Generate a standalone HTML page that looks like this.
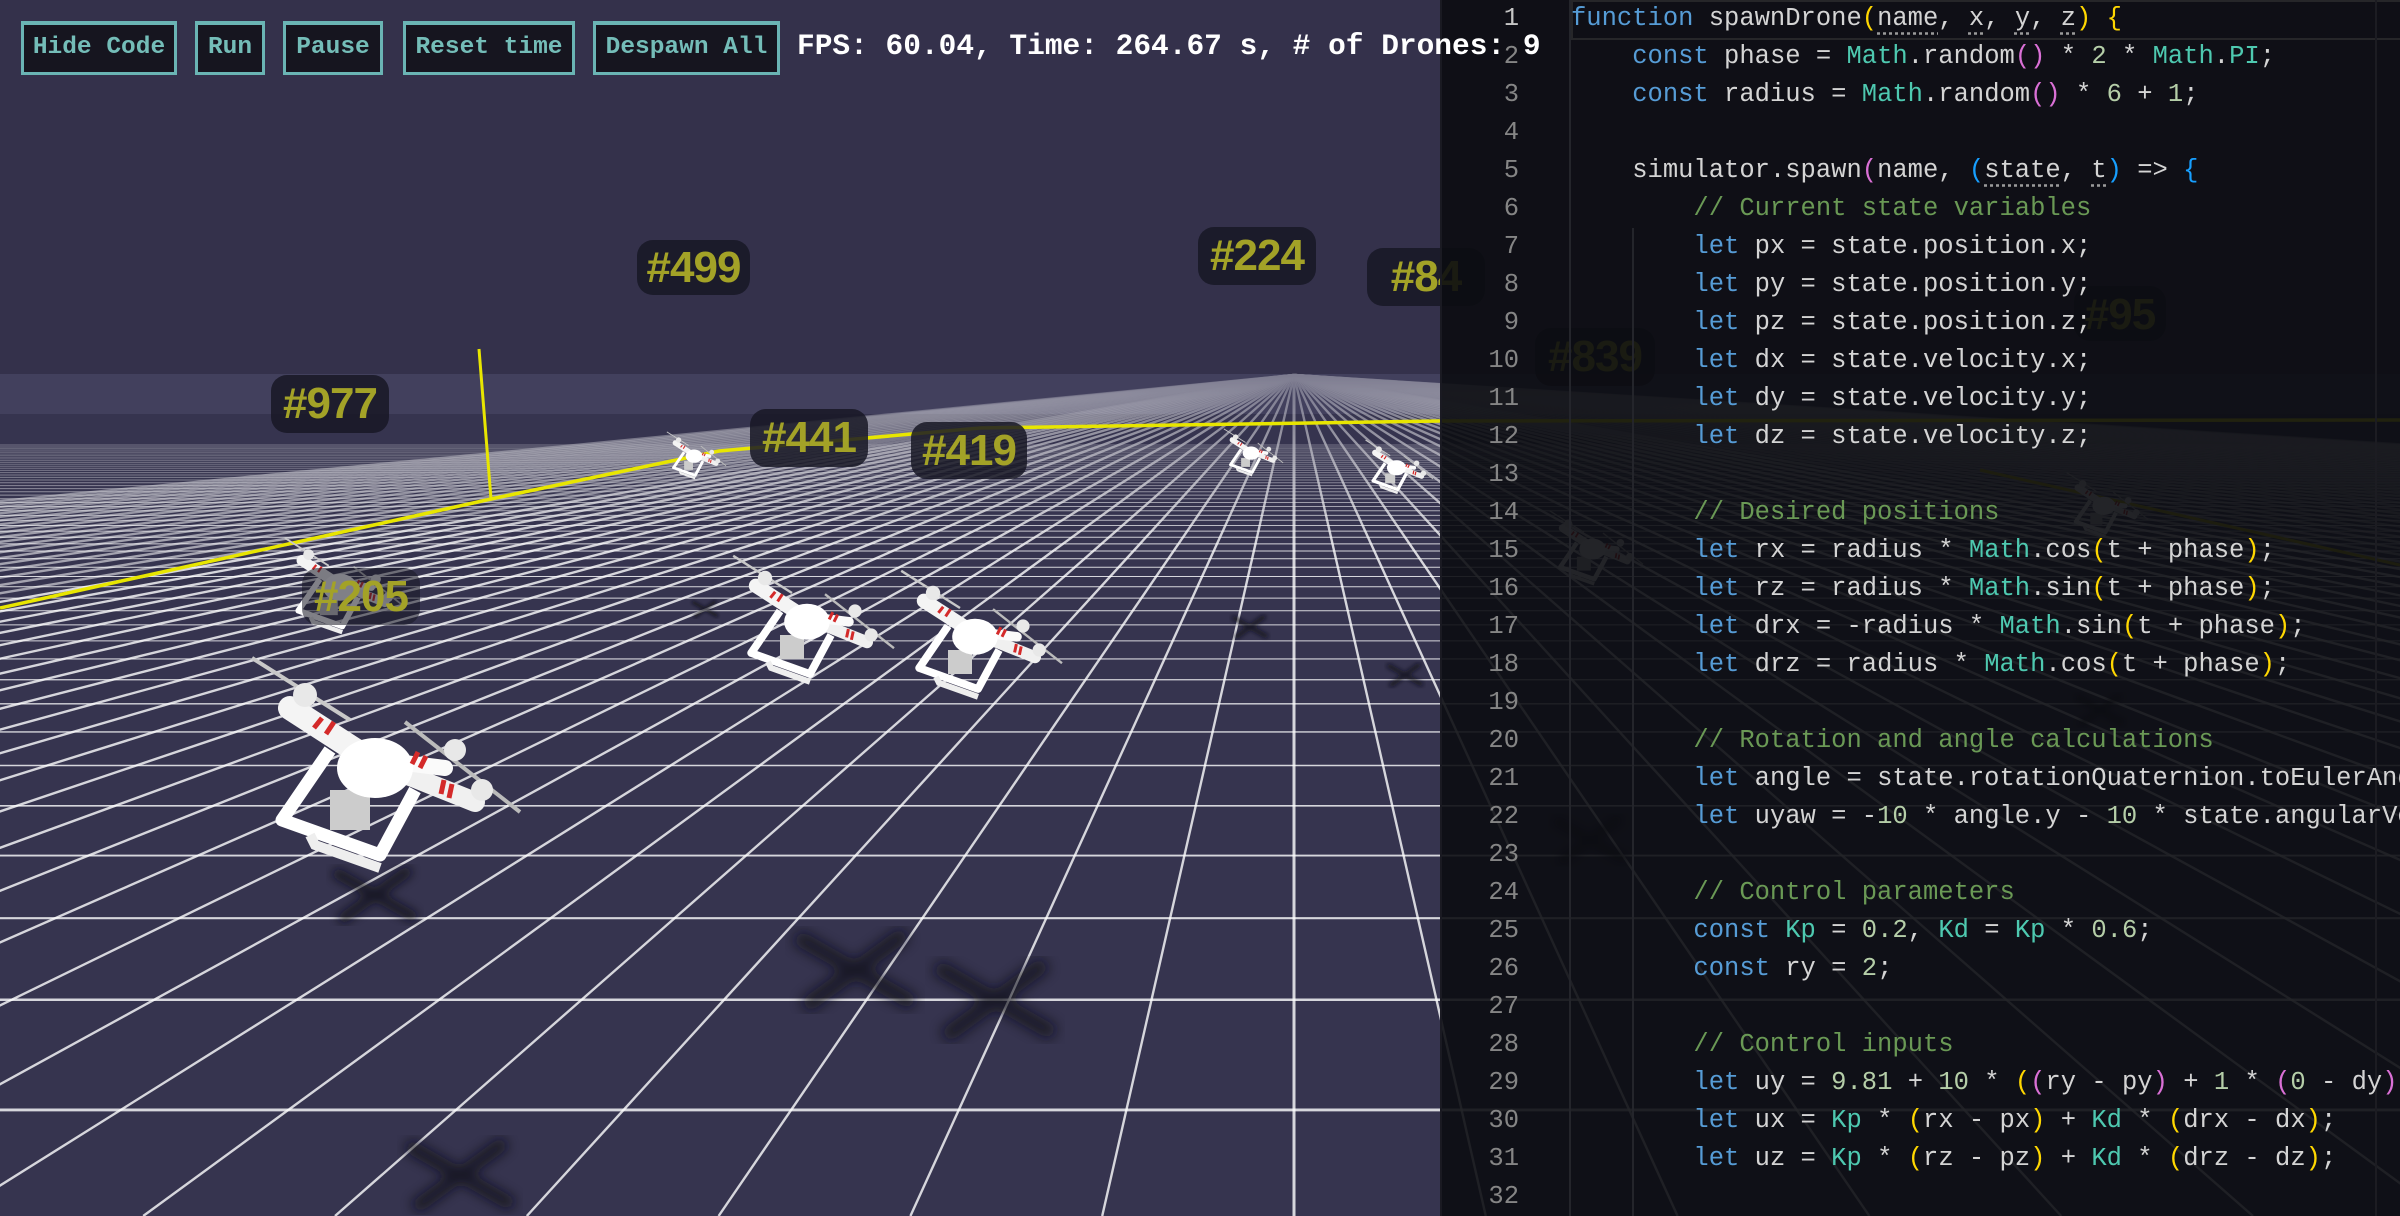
<!DOCTYPE html>
<html><head><meta charset="utf-8">
<style>
html,body{margin:0;padding:0;width:2400px;height:1216px;overflow:hidden;background:#34314b;position:relative;}
#grid{position:absolute;left:0;top:0;}
#ov{position:absolute;left:0;top:0;}
.lab{position:absolute;background:rgba(24,23,36,.85);border-radius:16px;color:#a3a227;font:bold 44px/58px "Liberation Sans Narrow","Liberation Sans",sans-serif;text-align:center;letter-spacing:-1px;}
#panel{position:absolute;left:1440px;top:0;width:960px;height:1216px;background:rgba(11,12,17,.9);border-left:2px solid #1a1a22;}
#nums{position:absolute;left:0;top:0;width:77px;text-align:right;color:#858585;font:25.5px/38px "Liberation Mono",monospace;white-space:pre;}
#code{position:absolute;left:129px;top:0;width:831px;color:#d4d4d4;font:25.5px/38px "Liberation Mono",monospace;white-space:pre;overflow:hidden;}
.k{color:#569cd6}.m{color:#4ec9b0}.n{color:#b5cea8}.c{color:#6a9955}.y{color:#ffd700}.p{color:#da70d6}.b{color:#179fff}
.u{text-decoration:underline dotted #9a9a9a;text-underline-offset:7px}
.g{position:absolute;top:0;width:2px;background:#24252b;}
#cur{position:absolute;left:129px;top:0;width:831px;height:36px;border:2px solid #262629;border-right:none;}
.btn{position:absolute;top:21px;height:54px;box-sizing:border-box;border:3px solid #6ab4b4;border-top-width:4px;background:#16151f;color:#74bdb8;font:bold 24.5px/46px "Liberation Mono",monospace;text-align:center;}
#fps{position:absolute;left:797px;top:26px;color:#fff;font:bold 29.5px/40px "Liberation Mono",monospace;white-space:pre;}
</style></head><body>
<svg id="grid" width="2400" height="1216" viewBox="0 0 2400 1216">
<defs>
<linearGradient id="mg" x1="0" y1="0" x2="0" y2="1216" gradientUnits="userSpaceOnUse">
<stop offset="0.306" stop-color="#fff" stop-opacity="0.3"/>
<stop offset="0.36" stop-color="#fff" stop-opacity="0.6"/>
<stop offset="0.45" stop-color="#fff" stop-opacity="1"/>
</linearGradient>
<mask id="mk" maskUnits="userSpaceOnUse" x="0" y="0" width="2400" height="1216"><rect width="2400" height="1216" fill="url(#mg)"/></mask>
</defs>
<rect width="2400" height="1216" fill="#34314b"/>
<rect x="0" y="374" width="2400" height="842" fill="#36344f"/>
<rect x="0" y="374" width="2400" height="40" fill="#5a5878" opacity=".35"/>
<g id="gl" stroke="#ffffff" fill="none" mask="url(#mk)"></g>
</svg>
<script>
(function(){
var g=document.getElementById('gl');
var vx=1294,vy=375,h=925,p=950,s=211,out='';
for(var k=-45;k<=70;k++){
 var xb=vx+k*191.8;
 var sw=k==0?3:2.4;
 var op=Math.abs(k)>25?.55:.8;
 out+='<line x1="'+vx+'" y1="'+vy+'" x2="'+xb.toFixed(1)+'" y2="1216" stroke-width="'+sw+'" stroke-opacity="'+op+'"/>';
}
for(var j=-4;j<=55;j++){
 var d=34.6+j*s; if(p+d<=0) continue;
 var r=p/(p+d);
 var y=vy+h*r; if(y>1230) continue;
 var w=Math.max(1,3.6*r);
 var op2=Math.min(.8,4.5*r);
 out+='<line x1="0" y1="'+y.toFixed(2)+'" x2="2400" y2="'+y.toFixed(2)+'" stroke-width="'+w.toFixed(2)+'" stroke-opacity="'+op2.toFixed(2)+'"/>';
}
g.innerHTML=out;
})();
</script>
<svg id="ov" width="2400" height="1216" viewBox="0 0 2400 1216">
<defs>
<filter id="bl"><feGaussianBlur stdDeviation="4"/></filter>
<symbol id="dr" viewBox="0 0 330 230">
 <line x1="22" y1="8" x2="120" y2="70" stroke="#c8c8c8" stroke-width="4"/>
 <line x1="175" y1="72" x2="290" y2="162" stroke="#bbb" stroke-width="4"/>
 <path d="M100 100 L52 170 L150 205 L185 140" stroke="#fff" stroke-width="13" fill="none" stroke-linejoin="round"/>
 <path d="M80 185 L85 195 L150 218" stroke="#eee" stroke-width="10" fill="none"/>
 <rect x="100" y="140" width="40" height="40" fill="#ccc"/>
 <line x1="60" y1="58" x2="125" y2="100" stroke="#f4f4f4" stroke-width="24" stroke-linecap="round"/>
 <line x1="170" y1="122" x2="245" y2="152" stroke="#f0f0f0" stroke-width="20" stroke-linecap="round"/>
 <line x1="150" y1="110" x2="215" y2="118" stroke="#fafafa" stroke-width="16" stroke-linecap="round"/>
 <ellipse cx="145" cy="118" rx="38" ry="30" fill="#fff"/>
 <circle cx="75" cy="45" r="12" fill="#e8e8e8"/><circle cx="225" cy="100" r="11" fill="#e8e8e8"/><circle cx="252" cy="140" r="11" fill="#e8e8e8"/>
 <path d="M92 68 l-8 10 M104 72 l-8 12 M188 102 l-6 12 M196 106 l-6 12 M214 130 l-3 14 M222 134 l-3 14" stroke="#d42a2a" stroke-width="5"/>
</symbol>
<symbol id="sh" viewBox="0 0 100 60"><g filter="url(#bl)" stroke="#101018" stroke-width="9" opacity=".75"><line x1="15" y1="10" x2="85" y2="50"/><line x1="80" y1="8" x2="20" y2="52"/></g></symbol>
</defs>
<use href="#sh" x="770" y="920" width="170" height="100"/>
<use href="#sh" x="910" y="950" width="170" height="100"/>
<use href="#sh" x="370" y="1130" width="180" height="90"/>
<use href="#sh" x="310" y="860" width="130" height="70"/>
<use href="#sh" x="1215" y="612" width="70" height="30"/>
<use href="#sh" x="1370" y="660" width="70" height="30"/>
<use href="#sh" x="680" y="598" width="50" height="22"/>
<use href="#sh" x="1530" y="810" width="120" height="60"/>
<use href="#sh" x="2050" y="690" width="100" height="40"/>
<path d="M0 608 L491 499 L719 451 L980 428 L1440 421 L2400 420" stroke="#e8e600" stroke-width="3.5" fill="none"/>
<line x1="479" y1="349" x2="491" y2="499" stroke="#e8e600" stroke-width="3"/>
<line x1="1980" y1="470" x2="2400" y2="565" stroke="#bdb800" stroke-width="3"/>
<use href="#dr" x="662" y="430" width="73" height="51"/>
<use href="#dr" x="1219" y="427" width="73" height="51"/>
<use href="#dr" x="1360" y="438" width="83" height="58"/>
<use href="#dr" x="275" y="534" width="148" height="104"/>
<use href="#dr" x="720" y="551" width="198" height="138"/>
<use href="#dr" x="888" y="566" width="198" height="138"/>
<use href="#dr" x="230" y="650" width="330" height="230"/>
<use href="#dr" x="1542" y="508" width="115" height="80"/>
<use href="#dr" x="2060" y="470" width="100" height="70"/>
</svg>
<div class="lab" style="left:637px;top:240px;width:113px;height:55px;line-height:55px">#499</div>
<div class="lab" style="left:1198px;top:227px;width:118px;height:58px">#224</div>
<div class="lab" style="left:1367px;top:248px;width:118px;height:58px">#84</div>
<div class="lab" style="left:271px;top:375px;width:118px;height:58px">#977</div>
<div class="lab" style="left:750px;top:409px;width:118px;height:58px">#441</div>
<div class="lab" style="left:911px;top:422px;width:116px;height:57px">#419</div>
<div class="lab" style="left:302px;top:568px;width:118px;height:57px;background:rgba(24,23,36,.55)">#205</div>
<div class="lab" style="left:1535px;top:328px;width:120px;height:58px">#839</div>
<div class="lab" style="left:2074px;top:286px;width:92px;height:55px">#95</div>
<div id="panel">
<div id="cur"></div>
<div class="g" style="left:127px;height:1216px"></div>
<div class="g" style="left:190px;top:228px;height:988px"></div>
<div class="g" style="left:933px;height:1216px;background:#1c1c22"></div>
<div id="nums"><span style="color:#c6c6c6">1</span>
2
3
4
5
6
7
8
9
10
11
12
13
14
15
16
17
18
19
20
21
22
23
24
25
26
27
28
29
30
31
32</div>
<div id="code"><span class="k">function</span> spawnDrone<span class="y">(</span><span class="u">name</span>, <span class="u">x</span>, <span class="u">y</span>, <span class="u">z</span><span class="y">)</span> <span class="y">{</span>
    <span class="k">const</span> phase = <span class="m">Math</span>.random<span class="p">()</span> * <span class="n">2</span> * <span class="m">Math</span>.<span class="m">PI</span>;
    <span class="k">const</span> radius = <span class="m">Math</span>.random<span class="p">()</span> * <span class="n">6</span> + <span class="n">1</span>;

    simulator.spawn<span class="p">(</span>name, <span class="b">(</span><span class="u">state</span>, <span class="u">t</span><span class="b">)</span> =&gt; <span class="b">{</span>
        <span class="c">// Current state variables</span>
        <span class="k">let</span> px = state.position.x;
        <span class="k">let</span> py = state.position.y;
        <span class="k">let</span> pz = state.position.z;
        <span class="k">let</span> dx = state.velocity.x;
        <span class="k">let</span> dy = state.velocity.y;
        <span class="k">let</span> dz = state.velocity.z;

        <span class="c">// Desired positions</span>
        <span class="k">let</span> rx = radius * <span class="m">Math</span>.cos<span class="y">(</span>t + phase<span class="y">)</span>;
        <span class="k">let</span> rz = radius * <span class="m">Math</span>.sin<span class="y">(</span>t + phase<span class="y">)</span>;
        <span class="k">let</span> drx = -radius * <span class="m">Math</span>.sin<span class="y">(</span>t + phase<span class="y">)</span>;
        <span class="k">let</span> drz = radius * <span class="m">Math</span>.cos<span class="y">(</span>t + phase<span class="y">)</span>;

        <span class="c">// Rotation and angle calculations</span>
        <span class="k">let</span> angle = state.rotationQuaternion.toEulerAngles<span class="y">()</span>;
        <span class="k">let</span> uyaw = -<span class="n">10</span> * angle.y - <span class="n">10</span> * state.angularVelocity.y;

        <span class="c">// Control parameters</span>
        <span class="k">const</span> <span class="m">Kp</span> = <span class="n">0.2</span>, <span class="m">Kd</span> = <span class="m">Kp</span> * <span class="n">0.6</span>;
        <span class="k">const</span> ry = <span class="n">2</span>;

        <span class="c">// Control inputs</span>
        <span class="k">let</span> uy = <span class="n">9.81</span> + <span class="n">10</span> * <span class="y">(</span><span class="p">(</span>ry - py<span class="p">)</span> + <span class="n">1</span> * <span class="p">(</span><span class="n">0</span> - dy<span class="p">)</span><span class="y">)</span>;
        <span class="k">let</span> ux = <span class="m">Kp</span> * <span class="y">(</span>rx - px<span class="y">)</span> + <span class="m">Kd</span> * <span class="y">(</span>drx - dx<span class="y">)</span>;
        <span class="k">let</span> uz = <span class="m">Kp</span> * <span class="y">(</span>rz - pz<span class="y">)</span> + <span class="m">Kd</span> * <span class="y">(</span>drz - dz<span class="y">)</span>;
</div>
</div>
<div class="btn" style="left:21px;width:156px">Hide Code</div>
<div class="btn" style="left:195px;width:70px">Run</div>
<div class="btn" style="left:283px;width:100px">Pause</div>
<div class="btn" style="left:403px;width:172px">Reset time</div>
<div class="btn" style="left:593px;width:187px">Despawn All</div>
<div id="fps">FPS: 60.04, Time: 264.67 s, # of Drones: 9</div>
</body></html>
